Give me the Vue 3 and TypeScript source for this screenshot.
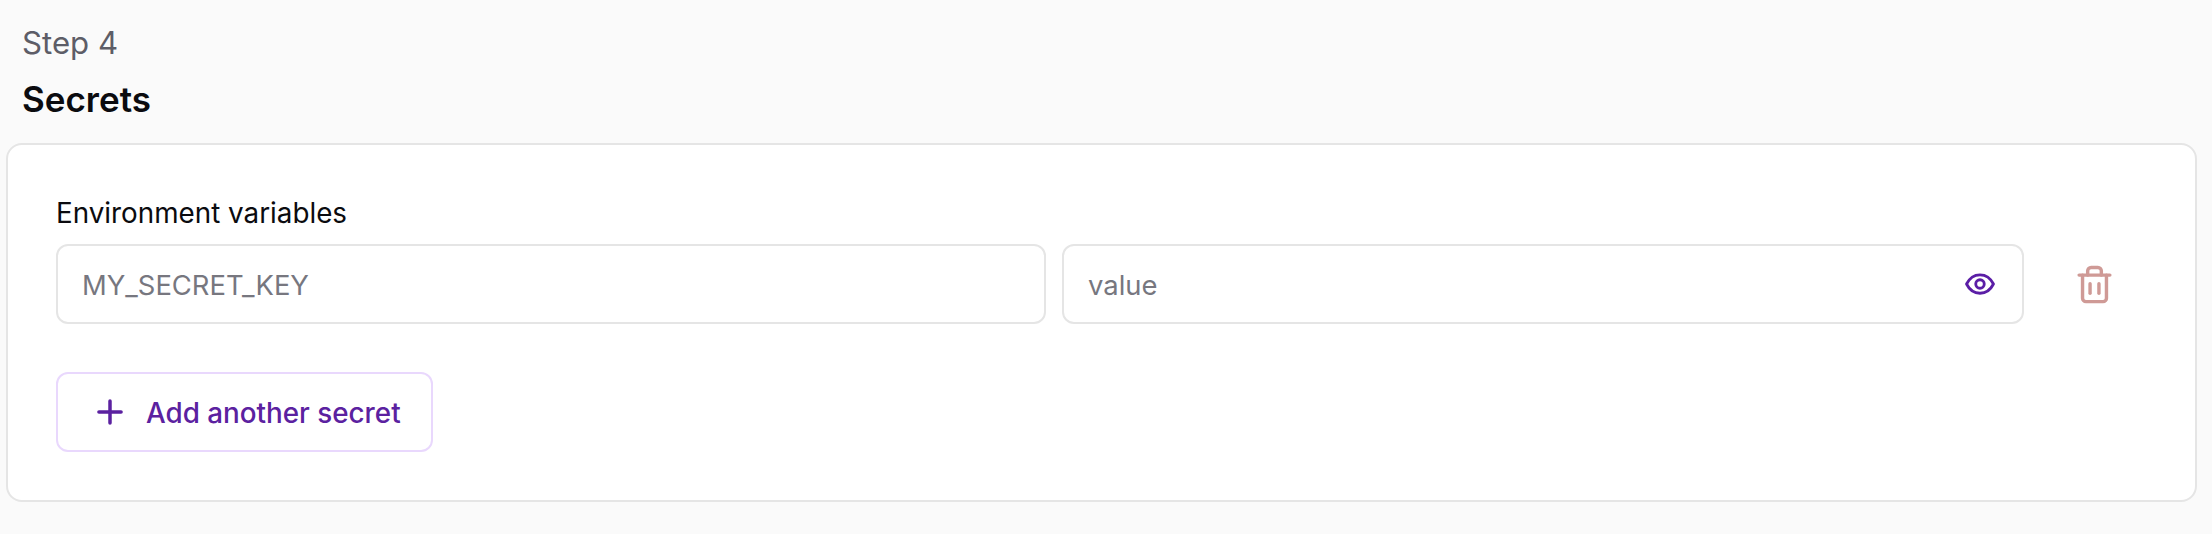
<script setup lang="ts">
const step = 'Step 4'
const title = 'Secrets'
</script>

<template>
  <main class="page">
    <header class="head">
      <p class="step">{{ step }}</p>
      <h2 class="title">{{ title }}</h2>
    </header>
    <section class="card">
      <label class="label">Environment variables</label>
      <div class="row">
        <input class="field" type="text" placeholder="MY_SECRET_KEY" />
        <div class="value-wrap">
          <input class="field" type="password" placeholder="value" />
          <button class="eye" aria-label="Show value">
            <svg viewBox="0 0 24 24" fill="none" stroke="currentColor" stroke-width="2" stroke-linecap="round" stroke-linejoin="round">
              <path d="M2.5 12C4.6 7.8 8 5.5 12 5.5s7.4 2.3 9.5 6.5c-2.1 4.2-5.5 6.5-9.5 6.5S4.6 16.2 2.5 12z" />
              <circle cx="12" cy="12" r="3" />
            </svg>
          </button>
        </div>
        <button class="trash" aria-label="Remove secret">
          <svg viewBox="0 0 24 24" fill="none" stroke="currentColor" stroke-width="2" stroke-linecap="round" stroke-linejoin="round">
            <path d="M3 6.5h18" />
            <path d="M19 6.5V20a2 2 0 0 1-2 2H7a2 2 0 0 1-2-2V6.5" />
            <path d="M8 6.5V4a2 2 0 0 1 2-2h4a2 2 0 0 1 2 2v2.5" />
            <path d="M9.4 11.5v5.6" />
            <path d="M14.6 11.5v5.6" />
          </svg>
        </button>
      </div>
      <button class="add">
        <svg viewBox="0 0 24 24" fill="none" stroke="currentColor" stroke-width="3" stroke-linecap="round">
          <path d="M12 2.5v19" />
          <path d="M2.5 12h19" />
        </svg>
        <span class="add-text">Add another secret</span>
      </button>
    </section>
  </main>
</template>

<style>
body {
  background: #fafafa;
}
</style>

<style scoped>
.page {
  height: 534px;
  box-sizing: border-box;
  padding: 0 15px 0 6px;
  background: #fafafa;
  font-family: Inter, "Liberation Sans", sans-serif;
  color: #0b0b0f;
}
.head {
  padding: 24px 0 0 16px;
}
.step {
  margin: 0;
  font-size: 31.2px;
  line-height: 38px;
  color: #5d5d67;
}
.title {
  margin: 18px 0 0;
  font-size: 35px;
  line-height: 38px;
  font-weight: 600;
}
.card {
  margin-top: 25px;
  height: 359px;
  box-sizing: border-box;
  padding: 50px 49px 0 48px;
  background: #fff;
  border: 2px solid #e5e5e5;
  border-radius: 16px;
}
.label {
  display: block;
  font-size: 27.8px;
  line-height: 36px;
  font-weight: 430;
}
.row {
  display: grid;
  grid-template-columns: 990fr 962fr auto;
  align-items: center;
  gap: 16px;
  margin-top: 13px;
}
.field {
  width: 100%;
  min-width: 0;
  height: 80px;
  box-sizing: border-box;
  padding: 2px 24px 0;
  border: 2px solid #e5e5e5;
  border-radius: 12px;
  background: #fff;
  font: inherit;
  font-size: 27.4px;
  outline: none;
}
.field::placeholder {
  color: #77777f;
  opacity: 1;
}
.value-wrap {
  position: relative;
  min-width: 0;
  display: flex;
}
.eye {
  position: absolute;
  top: 23px;
  right: 27px;
  width: 34px;
  height: 34px;
  padding: 0;
  border: none;
  background: none;
  color: #5b1ea6;
}
.eye svg,
.trash svg,
.add svg {
  display: block;
}
.trash {
  width: 41px;
  height: 41px;
  margin: 0 31px 0 34px;
  padding: 0;
  border: none;
  background: none;
  color: #cf9a96;
}
.add {
  display: flex;
  align-items: center;
  gap: 22px;
  margin-top: 48px;
  height: 80px;
  width: 377px;
  box-sizing: border-box;
  padding: 0 0 0 38px;
  border: 2px solid #e9d8fd;
  border-radius: 12px;
  background: #fff;
  color: #5b21a0;
  font: inherit;
  font-size: 27.8px;
  font-weight: 460;
}
.add svg {
  flex: none;
  width: 28px;
  height: 28px;
}
.add-text {
  padding-top: 2px;
}
</style>
